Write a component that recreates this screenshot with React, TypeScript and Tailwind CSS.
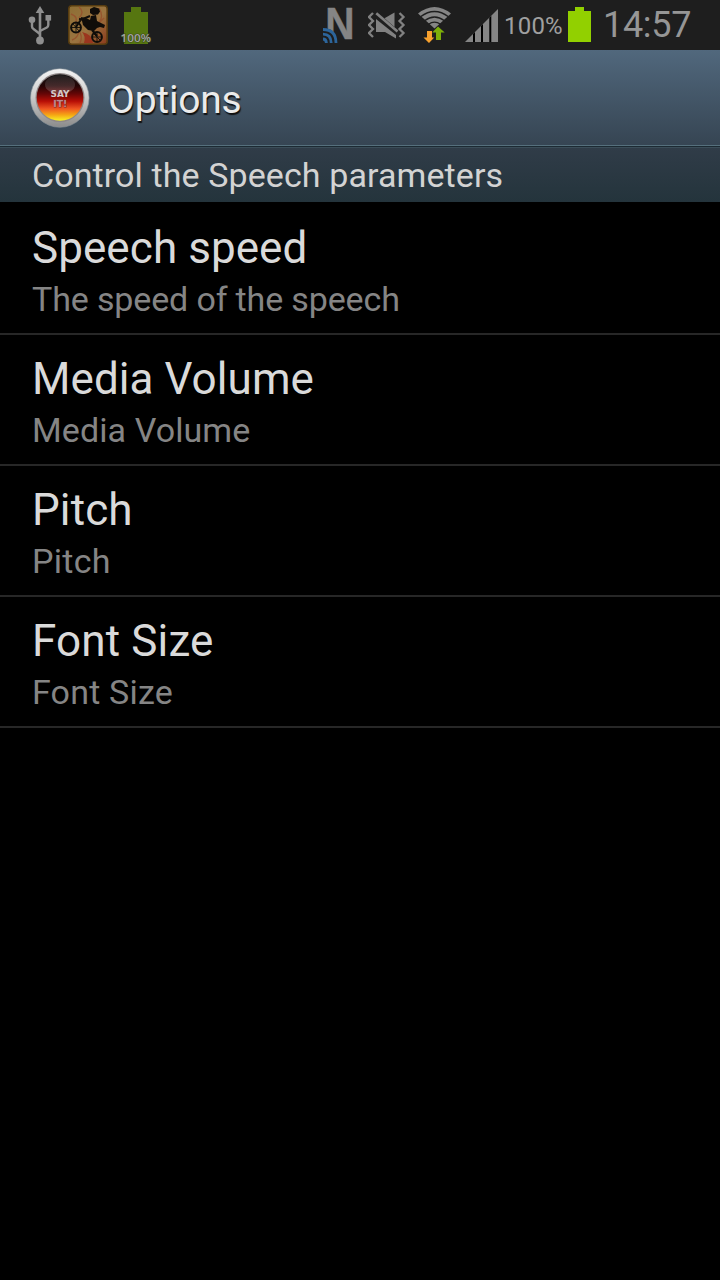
import React from 'react';

const options = [
  { title: 'Speech speed', summary: 'The speed of the speech', titleTrack: 'tracking-[0.07px]', summaryTrack: 'tracking-[-0.14px]' },
  { title: 'Media Volume', summary: 'Media Volume', titleTrack: 'tracking-[0.07px]', summaryTrack: 'tracking-[0.1px]' },
  { title: 'Pitch', summary: 'Pitch', titleTrack: 'tracking-[0.1px]', summaryTrack: 'tracking-[0.3px]' },
  { title: 'Font Size', summary: 'Font Size', titleTrack: 'tracking-[0.15px]', summaryTrack: 'tracking-[0.18px]' },
];

function UsbIcon() {
  return (
    <svg className="ml-7 shrink-0" width="24" height="50" viewBox="28 0 24 50" fill="#8f8f8f">
      <path d="M40 6l4.3 7h-3v26h-2.6V13h-3z" />
      <circle cx="40" cy="40.5" r="3.9" />
      <circle cx="32" cy="19.8" r="3.3" />
      <rect x="45.5" y="15" width="5.6" height="5.6" />
      <path d="M32 20v6.5q0 1.5 1.5 2.5L40 34M48.3 19v6q0 1.5-1.5 2.5L40 31" fill="none" stroke="#8f8f8f" strokeWidth="2.4" />
    </svg>
  );
}

function BikeIcon() {
  return (
    <svg className="ml-4 shrink-0" width="40" height="50" viewBox="68 0 40 50">
      <defs>
        <linearGradient id="bike" x1="0" y1="0" x2="1" y2="1">
          <stop offset="0" stopColor="#8d6e34" />
          <stop offset="0.55" stopColor="#9b7440" />
          <stop offset="1" stopColor="#8b3a1c" />
        </linearGradient>
      </defs>
      <rect x="68.8" y="5.8" width="38.4" height="38.4" rx="3" fill="url(#bike)" stroke="#573c10" strokeWidth="1.6" />
      <path d="M71 14q8 3 4 10M79 7q6 5 0 11M99 8q5 8 0 15l5-5M72 40q6-2 7-9 4 5 1 12M84 34q5 4 3 9M102 25l3 7" fill="none" stroke="#96552e" strokeWidth="1.4" />
      <path d="M84 43q2-7-2-11 10 2 11 11z" fill="#9b351e" />
      <g fill="none" stroke="#100d09">
        <circle cx="76" cy="27.5" r="4.9" strokeWidth="2" />
        <circle cx="97" cy="37" r="4.9" strokeWidth="2" />
        <path d="M76 23v9M71.5 27.5h9M97 32v10M92.5 37h9M73 24l6 7M94 34l6 6" strokeWidth="0.9" />
        <path d="M76 27l6-9M79 19l9 1M92 30l5 6M90 16l-7 3" strokeWidth="2" />
      </g>
      <path d="M81 17l5 1 4 2 1-4 5-1 1 6 8 4-1 3-4-1-3 1-3 3-6-1-5-5z" fill="#100d09" />
      <path d="M90 9l4-2 5 1.5 1 3-2 3-5 .5-3-2z" fill="#100d09" />
    </svg>
  );
}

function BatteryBadgeIcon() {
  return (
    <svg className="ml-3 shrink-0" width="32" height="50" viewBox="120 0 32 50">
      <path d="M124 12h7V7h10v5h7v32h-24z" fill="#567610" />
      <text x="120.5" y="42" textLength="30.5" lengthAdjust="spacingAndGlyphs" fontFamily="Open Sans, sans-serif" fontSize="11.5" fontWeight="600" fill="#a2a2a2" stroke="#3a4a18" strokeWidth="1.2" paintOrder="stroke">100%</text>
    </svg>
  );
}

function NfcIcon() {
  return (
    <svg className="shrink-0" width="40" height="50" viewBox="322 0 40 50">
      <text x="325.2" y="39" textLength="29.3" lengthAdjust="spacingAndGlyphs" fontFamily="Liberation Sans, sans-serif" fontSize="43.5" fontWeight="700" fill="#858585" stroke="#858585" strokeWidth="0.5">N</text>
      <path d="M322 28q15 0 15.5 15H322z" fill="#1e1e1e" />
      <g fill="none" stroke="#2c659b" strokeWidth="2.8">
        <path d="M323 29.5Q336 29.5 336 43" />
        <path d="M323 34.2Q331 34.2 331.2 43" />
        <path d="M323 39Q326.2 39 326.4 43" />
      </g>
    </svg>
  );
}

function VibrateIcon() {
  return (
    <svg className="ml-1.5 shrink-0" width="38" height="50" viewBox="368 0 38 50" fill="#818181">
      <path d="M376 19L396 35v3.5L385 32h-9z" />
      <path d="M384.5 18.2L394.5 12.5V27z" />
      <path d="M376.3 13.2L397.5 31.5" stroke="#818181" strokeWidth="2.6" />
      <path d="M373 13l-4 4 4 4-4 4 4 4-4 4 4 4M399.5 13l4 4-4 4 4 4-4 4 4 4-4 4" fill="none" stroke="#818181" strokeWidth="2.3" />
    </svg>
  );
}

function WifiIcon() {
  return (
    <svg className="ml-3 shrink-0" width="34" height="50" viewBox="418 0 34 50">
      <path d="M418 13.5Q434.5 0.5 451 13.5L434.5 28.5z" fill="#858585" />
      <g fill="none" stroke="#1e1e1e" strokeWidth="1.3">
        <path d="M420.5 16.8Q434.5 6.2 448.5 16.8" />
        <path d="M424.5 20.8Q434.5 13.2 444.5 20.8" />
        <path d="M428.5 24.3Q434.5 19.8 440.5 24.3" />
      </g>
      <path d="M427 31h5v6.5h2.3L429 43l-5.5-5.5h3.5z" fill="#f8a12e" />
      <path d="M438 26.5l6.7 6h-3.7V40h-5v-7.5h-3.8z" fill="#7dae09" />
    </svg>
  );
}

function SignalIcon() {
  return (
    <svg className="ml-[13px] shrink-0" width="33" height="50" viewBox="465 0 33 50">
      <path d="M465 42L498 9v33z" fill="#858585" />
      <path d="M473 34l2-2v10h-2zM481 26l2-2v18h-2zM489.3 17.7l2-2V42h-2z" fill="#000" />
    </svg>
  );
}

function StatusBar() {
  return (
    <div className="flex h-[50px] shrink-0 items-center bg-[#1e1e1e]">
      <UsbIcon />
      <BikeIcon />
      <BatteryBadgeIcon />
      <div className="flex-1" />
      <NfcIcon />
      <VibrateIcon />
      <WifiIcon />
      <SignalIcon />
      <span className="ml-[6px] w-[64px] pt-[1px] text-[24px] leading-[30px] tracking-[0.2px] whitespace-nowrap text-[#a0a0a0]">100%</span>
      <svg className="shrink-0" width="23" height="50" viewBox="568 0 23 50">
        <path d="M568 11h7V7h9v4h7v31h-23z" fill="#92d000" />
      </svg>
      <span className="ml-[12px] w-[117px] text-[36px] leading-[50px] tracking-[-0.3px] whitespace-nowrap text-[#969696]">14:57</span>
    </div>
  );
}

function AppIcon() {
  return (
    <svg className="ml-[29px] shrink-0" width="62" height="62" viewBox="0 0 62 62">
      <defs>
        <linearGradient id="rim" x1="0" y1="0" x2="0" y2="1">
          <stop offset="0" stopColor="#f4f4f4" />
          <stop offset="0.45" stopColor="#cfcfcf" />
          <stop offset="1" stopColor="#8b8b8b" />
        </linearGradient>
        <linearGradient id="flag" x1="0" y1="0" x2="0" y2="1">
          <stop offset="0" stopColor="#151515" />
          <stop offset="0.25" stopColor="#240506" />
          <stop offset="0.42" stopColor="#650606" />
          <stop offset="0.58" stopColor="#b70e06" />
          <stop offset="0.74" stopColor="#ef5622" />
          <stop offset="0.87" stopColor="#f5a414" />
          <stop offset="1" stopColor="#f8f524" />
        </linearGradient>
        <linearGradient id="gloss" x1="0" y1="0" x2="0" y2="1">
          <stop offset="0" stopColor="#fff" stopOpacity="0.05" />
          <stop offset="1" stopColor="#fff" stopOpacity="0.22" />
        </linearGradient>
      </defs>
      <circle cx="30.8" cy="31" r="29.3" fill="url(#rim)" stroke="#8a949b" strokeWidth="0.6" />
      <circle cx="31" cy="30.5" r="24.5" fill="#8f8787" />
      <circle cx="31" cy="30.5" r="23.3" fill="url(#flag)" />
      <ellipse cx="31" cy="17.5" rx="15" ry="9.5" fill="url(#gloss)" />
      <text x="31" y="29.6" textAnchor="middle" textLength="19" lengthAdjust="spacingAndGlyphs" fontFamily="DejaVu Sans, sans-serif" fontSize="9.5" fontWeight="700" fill="#d3c8c8">SAY</text>
      <text x="31.3" y="40" textAnchor="middle" textLength="14" lengthAdjust="spacingAndGlyphs" fontFamily="DejaVu Sans, sans-serif" fontSize="9.5" fontWeight="700" fill="#b98a90" stroke="#8a2a2a" strokeWidth="0.8" paintOrder="stroke">IT!</text>
    </svg>
  );
}

export default function App() {
  return (
    <div className="flex h-[1280px] w-[720px] flex-col overflow-hidden bg-black font-[Roboto,sans-serif]">
      <StatusBar />
      <header className="flex h-[96px] shrink-0 items-center border-b border-[#56707d] bg-linear-to-b from-[#51687d] to-[#364553]">
        <AppIcon />
        <h1 className="ml-[17px] pt-[5px] text-[39px] leading-[46px] tracking-[-0.2px] text-[#ebebeb] [text-shadow:1px_2px_1px_#111]">Options</h1>
      </header>
      <h2 className="flex h-[56px] shrink-0 flex-col border-t border-[#1c2a33] bg-[#3b4d58] pt-[1px] text-[34px] leading-[40px] tracking-[0.1px] text-[#d3d3d3]">
        <span className="flex-1 bg-linear-to-b from-[#303c48] to-[#24343c] pt-[7px] pl-8">Control the Speech parameters</span>
      </h2>
      <ul className="pt-[2px]">
        {options.map((o) => (
          <li key={o.title} className="flex h-[131px] flex-col border-b-2 border-[#272727] pt-[18px] pl-8">
            <span className={`text-[44px] leading-[52px] text-[#dadada] ${o.titleTrack}`}>{o.title}</span>
            <span className={`mt-[5px] text-[34px] leading-[40px] text-[#858585] ${o.summaryTrack}`}>{o.summary}</span>
          </li>
        ))}
      </ul>
    </div>
  );
}
